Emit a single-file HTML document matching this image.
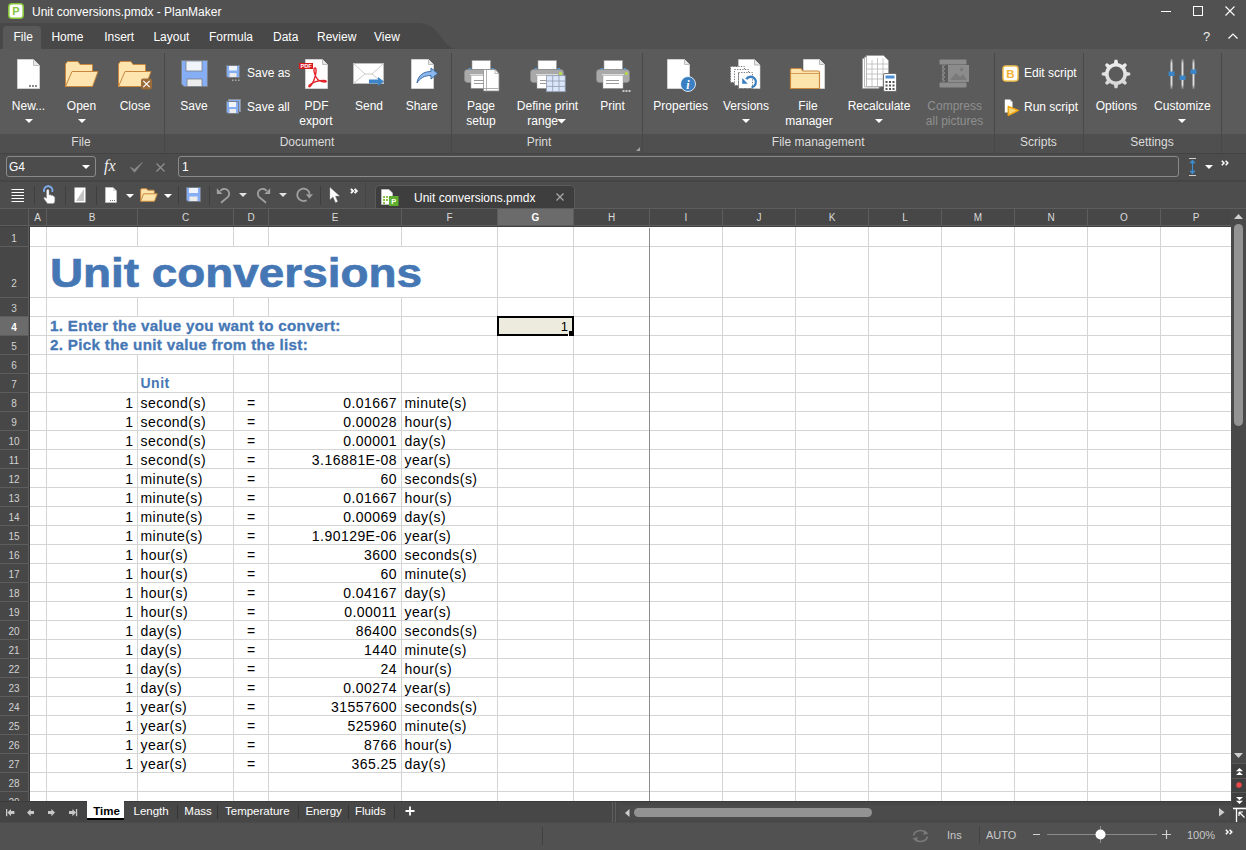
<!DOCTYPE html><html><head><meta charset="utf-8"><style>
html,body{margin:0;padding:0;}
body{width:1246px;height:850px;overflow:hidden;position:relative;background:#515151;font-family:"Liberation Sans",sans-serif;}
.t{position:absolute;white-space:nowrap;}
.r{position:absolute;}
.s{position:absolute;overflow:visible;}
</style></head><body>
<div class="r" style="left:0px;top:0px;width:1246px;height:23px;background:#515151;"></div>
<svg class="s" style="left:0px;top:23px;" width="470" height="26" viewBox="0 0 470 26"><path d="M0 0 H415 C431 0 435 6 441 14 C447 22 451 26 457 26 H0 Z" fill="#484848"/></svg>
<svg class="s" style="left:8px;top:3px;" width="16" height="16" viewBox="0 0 16 16"><rect x="0.8" y="0.8" width="14.4" height="14.4" rx="3" fill="#fff" stroke="#86c53a" stroke-width="1.6"/><text x="8" y="12.2" text-anchor="middle" font-family="Liberation Sans" font-weight="bold" font-size="11" fill="#86c53a">P</text></svg>
<div class="t " style="left:32px;top:4.84px;font-size:12px;line-height:14px;color:#ffffff;">Unit conversions.pmdx - PlanMaker</div>
<div class="r" style="left:1161px;top:11px;width:10px;height:1px;background:#fff;"></div>
<div class="r" style="left:1193px;top:6px;width:10px;height:10px;background:transparent;box-sizing:border-box;border:1px solid #fff;"></div>
<svg class="s" style="left:1225px;top:6px;" width="10" height="10" viewBox="0 0 10 10"><path d="M0.5 0.5 L9.5 9.5 M9.5 0.5 L0.5 9.5" stroke="#fff" stroke-width="1.1"/></svg>
<div class="t " style="left:1203px;top:28.50px;font-size:13px;line-height:15px;color:#eee;">?</div>
<svg class="s" style="left:1228px;top:33px;" width="10" height="6" viewBox="0 0 10 6"><path d="M0.5 5.5 L5 1 L9.5 5.5" stroke="#fff" stroke-width="1.2" fill="none"/></svg>
<svg class="s" style="left:3px;top:26px;" width="38" height="23" viewBox="0 0 38 23"><path d="M0 23 V4 Q0 0 4 0 H34 Q38 0 38 4 V23 Z" fill="#595959"/></svg>
<div class="t " style="left:13.5px;top:29.84px;font-size:12px;line-height:14px;color:#fff;">File</div>
<div class="t " style="left:51.4px;top:29.84px;font-size:12px;line-height:14px;color:#fff;">Home</div>
<div class="t " style="left:104.2px;top:29.84px;font-size:12px;line-height:14px;color:#fff;">Insert</div>
<div class="t " style="left:153.4px;top:29.84px;font-size:12px;line-height:14px;color:#fff;">Layout</div>
<div class="t " style="left:209px;top:29.84px;font-size:12px;line-height:14px;color:#fff;">Formula</div>
<div class="t " style="left:273px;top:29.84px;font-size:12px;line-height:14px;color:#fff;">Data</div>
<div class="t " style="left:317px;top:29.84px;font-size:12px;line-height:14px;color:#fff;">Review</div>
<div class="t " style="left:374px;top:29.84px;font-size:12px;line-height:14px;color:#fff;">View</div>
<div class="r" style="left:0px;top:49px;width:1246px;height:85px;background:#5b5b5b;"></div>
<div class="r" style="left:0px;top:134px;width:1246px;height:19px;background:#4f4f4f;"></div>
<div class="r" style="left:164px;top:53px;width:1px;height:100px;background:#484848;"></div>
<div class="r" style="left:451px;top:53px;width:1px;height:100px;background:#484848;"></div>
<div class="r" style="left:642px;top:53px;width:1px;height:100px;background:#484848;"></div>
<div class="r" style="left:994px;top:53px;width:1px;height:100px;background:#484848;"></div>
<div class="r" style="left:1083px;top:53px;width:1px;height:100px;background:#484848;"></div>
<div class="r" style="left:1221px;top:53px;width:1px;height:100px;background:#484848;"></div>
<div class="t" style="left:-19.0px;width:200px;text-align:center;top:135.34px;font-size:12px;line-height:14px;color:#dcdcdc;">File</div>
<div class="t" style="left:207.0px;width:200px;text-align:center;top:135.34px;font-size:12px;line-height:14px;color:#dcdcdc;">Document</div>
<div class="t" style="left:439.0px;width:200px;text-align:center;top:135.34px;font-size:12px;line-height:14px;color:#dcdcdc;">Print</div>
<div class="t" style="left:718.2px;width:200px;text-align:center;top:135.34px;font-size:12px;line-height:14px;color:#dcdcdc;">File management</div>
<div class="t" style="left:938.4000000000001px;width:200px;text-align:center;top:135.34px;font-size:12px;line-height:14px;color:#dcdcdc;">Scripts</div>
<div class="t" style="left:1052.0px;width:200px;text-align:center;top:135.34px;font-size:12px;line-height:14px;color:#dcdcdc;">Settings</div>
<svg class="s" style="left:17px;top:59px;" width="23" height="30" viewBox="0 0 23 30"><path d="M0.5 0.5 H16.5 L22.5 6.5 V29.5 H0.5 Z" fill="#fff" stroke="#cfcfcf"/><path d="M16.5 0.5 V6.5 H22.5" fill="#e8e8e8" stroke="#bdbdbd"/><rect x="12" y="26" width="2" height="2" fill="#8a8a8a"/><rect x="15" y="26" width="2" height="2" fill="#8a8a8a"/><rect x="18" y="26" width="2" height="2" fill="#8a8a8a"/></svg>
<div class="t" style="left:-71.5px;width:200px;text-align:center;top:98.84px;font-size:12px;line-height:14px;color:#fff;">New...</div>
<svg class="s" style="left:24.5px;top:119px;" width="8" height="4" viewBox="0 0 8 4"><path d="M0 0 H8 L4 4 Z" fill="#fff"/></svg>
<svg class="s" style="left:65px;top:61px;" width="35" height="28" viewBox="0 0 35 28"><path d="M0.5 25.5 V3 L2.5 0.5 H13 L15 3.5 H27 Q27.5 3.5 27.5 4 V10" fill="#fee5b0" stroke="#c8873c" stroke-width="1"/><path d="M0.5 25.5 L7 10.5 H33 L27.5 25.5 Z" fill="#fee5b0" stroke="#c8873c" stroke-width="1" stroke-linejoin="round"/></svg>
<div class="t" style="left:-18.5px;width:200px;text-align:center;top:98.84px;font-size:12px;line-height:14px;color:#fff;">Open</div>
<svg class="s" style="left:77.5px;top:119px;" width="8" height="4" viewBox="0 0 8 4"><path d="M0 0 H8 L4 4 Z" fill="#fff"/></svg>
<svg class="s" style="left:118px;top:61px;" width="35" height="30" viewBox="0 0 35 30"><path d="M0.5 25.5 V3 L2.5 0.5 H13 L15 3.5 H27 Q27.5 3.5 27.5 4 V10" fill="#fee5b0" stroke="#c8873c" stroke-width="1"/><path d="M0.5 25.5 L7 10.5 H33 L27.5 25.5 Z" fill="#fee5b0" stroke="#c8873c" stroke-width="1" stroke-linejoin="round"/><rect x="23" y="17.5" width="11" height="11" rx="2" fill="#9b6c3a"/><path d="M25.3 19.8 L31.7 26.2 M31.7 19.8 L25.3 26.2" stroke="#fff" stroke-width="1.2"/></svg>
<div class="t" style="left:35.0px;width:200px;text-align:center;top:98.84px;font-size:12px;line-height:14px;color:#fff;">Close</div>
<svg class="s" style="left:181px;top:60px;" width="28" height="28" viewBox="0 0 28 28"><g transform="scale(1)"><path d="M0.5 0.5 H26.5 V26.5 H3 L0.5 24 Z" fill="#86aef5" stroke="#7a7f88"/><rect x="5" y="1" width="16" height="10" fill="#f0f4fb" stroke="#7a7f88" stroke-width="0.8"/><rect x="6" y="19" width="15" height="7.5" fill="#ececec" stroke="#7a7f88" stroke-width="0.8"/></g></svg>
<div class="t" style="left:94.0px;width:200px;text-align:center;top:98.84px;font-size:12px;line-height:14px;color:#fff;">Save</div>
<svg class="s" style="left:226px;top:65px;" width="14" height="17" viewBox="0 0 14 17"><path d="M0.5 0.5 H13.5 V12.5 H2 L0.5 11 Z" fill="#86aef5" stroke="#7a7f88"/><rect x="3" y="1" width="8" height="4.5" fill="#f0f4fb"/><rect x="3.5" y="8" width="7" height="4" fill="#ececec"/><rect x="6" y="14.5" width="1.5" height="1.5" fill="#aaa"/><rect x="9" y="14.5" width="1.5" height="1.5" fill="#aaa"/><rect x="12" y="14.5" width="1.5" height="1.5" fill="#aaa"/></svg>
<div class="t " style="left:247px;top:66.34px;font-size:12px;line-height:14px;color:#fff;">Save as</div>
<svg class="s" style="left:226px;top:99px;" width="15" height="16" viewBox="0 0 15 16"><rect x="2.5" y="0.5" width="12" height="12" fill="#86aef5" stroke="#8a8f98"/><path d="M0.5 2.5 H12.5 V14.5 H2 L0.5 13 Z" fill="#86aef5" stroke="#7a7f88"/><rect x="3" y="3" width="7" height="5" fill="#f0f4fb"/><rect x="3.5" y="10" width="6.5" height="4" fill="#ececec"/></svg>
<div class="t " style="left:247px;top:100.34px;font-size:12px;line-height:14px;color:#fff;">Save all</div>
<svg class="s" style="left:299px;top:59px;" width="30" height="30" viewBox="0 0 30 30"><path d="M6.5 0.5 H23.5 L28.5 5.5 V29.5 H6.5 Z" fill="#fff" stroke="#d0d0d0"/><path d="M23.5 0.5 V5.5 H28.5" fill="#e6e6e6" stroke="#bdbdbd"/><path d="M16 9 C14 9 15 14 17 18 C18.5 21 22 23 26 23 C28 23 27.5 21.5 25 21.5 C20 21.5 14 23 10.5 26 C9 27.5 10 28.5 11.5 27 C14 24.5 16.5 18 17 13 C17.3 10 16.8 9 16 9 Z" fill="none" stroke="#e4222a" stroke-width="1.4"/><rect x="0" y="4" width="14" height="6" fill="#d71920"/><text x="7" y="9.2" text-anchor="middle" font-family="Liberation Sans" font-weight="bold" font-size="5.6" fill="#fff">PDF</text></svg>
<div class="t" style="left:216.5px;width:200px;text-align:center;top:98.84px;font-size:12px;line-height:14px;color:#fff;">PDF</div>
<div class="t" style="left:216.0px;width:200px;text-align:center;top:114.34px;font-size:12px;line-height:14px;color:#fff;">export</div>
<svg class="s" style="left:353px;top:63px;" width="32" height="25" viewBox="0 0 32 25"><rect x="0.5" y="0.5" width="30" height="20" fill="#fff" stroke="#bdbdbd"/><path d="M1 1 L12 11 H19 L30 1 M1 20 L12 11 M19 11 L30 20" fill="none" stroke="#c4c4c4" stroke-width="0.9"/><path d="M16 16.5 H25 V14 L31 18.5 L25 23 V20.5 H16 Z" fill="#3d85c6"/></svg>
<div class="t" style="left:269.0px;width:200px;text-align:center;top:98.84px;font-size:12px;line-height:14px;color:#fff;">Send</div>
<svg class="s" style="left:411px;top:59px;" width="28" height="30" viewBox="0 0 28 30"><path d="M0.5 0.5 H17.5 L22.5 5.5 V29.5 H0.5 Z" fill="#fff" stroke="#d0d0d0"/><path d="M17.5 0.5 V5.5 H22.5" fill="#e6e6e6" stroke="#bdbdbd"/><path d="M6 24 C7 16 13 12.5 20 12.5 V9 L26.5 14.5 L20 20 V16.5 C13.5 16.5 9 19 6 24 Z" fill="#8cb8ee" stroke="#3b6ea8" stroke-width="1"/></svg>
<div class="t" style="left:321.7px;width:200px;text-align:center;top:98.84px;font-size:12px;line-height:14px;color:#fff;">Share</div>
<svg class="s" style="left:463.5px;top:60px;" width="37" height="33" viewBox="0 0 37 33"><rect x="8" y="0.5" width="18.5" height="9" fill="#fff" stroke="#9a9a9a" stroke-width="0.6"/><rect x="4.5" y="8" width="2.5" height="1.6" fill="#4c9be0"/><rect x="27.5" y="8" width="2.5" height="1.6" fill="#4c9be0"/><path d="M3.5 9.5 H30.5 Q33.5 9.5 33.5 12.5 V19.5 Q33.5 22.5 30.5 22.5 H3.5 Q0.5 22.5 0.5 19.5 V12.5 Q0.5 9.5 3.5 9.5 Z" fill="#a9a9a9" stroke="#8a8a8a" stroke-width="0.7"/><rect x="6" y="14" width="22" height="1.3" fill="#dcdcdc"/><rect x="7" y="15.3" width="20" height="13" fill="#fff" stroke="#a0a0a0" stroke-width="0.5"/><path d="M10 20.5 H23 M10 23.5 H23" stroke="#9a9a9a" stroke-width="1"/><path d="M19.5 9.5 H31 L35 13.5 V31 H19.5 Z" fill="#fff" stroke="#8e8e8e" stroke-width="0.8"/><path d="M31 9.5 V13.5 H35" fill="none" stroke="#8e8e8e" stroke-width="0.6"/><path d="M22.5 10 V30.5 M20 28.5 H34.5" stroke="#9a9a9a" stroke-width="0.8"/></svg>
<div class="t" style="left:381.0px;width:200px;text-align:center;top:98.84px;font-size:12px;line-height:14px;color:#fff;">Page</div>
<div class="t" style="left:381.0px;width:200px;text-align:center;top:114.34px;font-size:12px;line-height:14px;color:#fff;">setup</div>
<svg class="s" style="left:529.5px;top:60px;" width="37" height="33" viewBox="0 0 37 33"><rect x="8" y="0.5" width="18.5" height="9" fill="#fff" stroke="#9a9a9a" stroke-width="0.6"/><rect x="4.5" y="8" width="2.5" height="1.6" fill="#4c9be0"/><rect x="27.5" y="8" width="2.5" height="1.6" fill="#4c9be0"/><path d="M3.5 9.5 H30.5 Q33.5 9.5 33.5 12.5 V19.5 Q33.5 22.5 30.5 22.5 H3.5 Q0.5 22.5 0.5 19.5 V12.5 Q0.5 9.5 3.5 9.5 Z" fill="#a9a9a9" stroke="#8a8a8a" stroke-width="0.7"/><rect x="6" y="14" width="22" height="1.3" fill="#dcdcdc"/><rect x="7" y="15.3" width="20" height="13" fill="#fff" stroke="#a0a0a0" stroke-width="0.5"/><path d="M10 20.5 H23 M10 23.5 H23" stroke="#9a9a9a" stroke-width="1"/><circle cx="30.4" cy="13.5" r="1.5" fill="#b6e03a"/><rect x="16.5" y="15.7" width="18.7" height="16" fill="#dce6fa" stroke="#8e9aad" stroke-width="0.8"/><path d="M16.5 21 H35.2 M16.5 26.4 H35.2 M22.7 15.7 V31.7 M29 15.7 V31.7" stroke="#8e9aad" stroke-width="0.8"/></svg>
<div class="t" style="left:447.5px;width:200px;text-align:center;top:98.84px;font-size:12px;line-height:14px;color:#fff;">Define print</div>
<div class="t " style="left:527.3px;top:114.34px;font-size:12px;line-height:14px;color:#fff;">range</div>
<svg class="s" style="left:557px;top:119px;" width="9" height="5" viewBox="0 0 9 5"><path d="M0 0 H9 L4.5 4.5 Z" fill="#fff"/></svg>
<svg class="s" style="left:596px;top:60px;" width="37" height="33" viewBox="0 0 37 33"><rect x="8" y="0.5" width="18.5" height="9" fill="#fff" stroke="#9a9a9a" stroke-width="0.6"/><rect x="4.5" y="8" width="2.5" height="1.6" fill="#4c9be0"/><rect x="27.5" y="8" width="2.5" height="1.6" fill="#4c9be0"/><path d="M3.5 9.5 H30.5 Q33.5 9.5 33.5 12.5 V19.5 Q33.5 22.5 30.5 22.5 H3.5 Q0.5 22.5 0.5 19.5 V12.5 Q0.5 9.5 3.5 9.5 Z" fill="#a9a9a9" stroke="#8a8a8a" stroke-width="0.7"/><rect x="6" y="14" width="22" height="1.3" fill="#dcdcdc"/><rect x="7" y="15.3" width="20" height="13" fill="#fff" stroke="#a0a0a0" stroke-width="0.5"/><path d="M10 20.5 H23 M10 23.5 H23" stroke="#9a9a9a" stroke-width="1"/><circle cx="30.4" cy="13.5" r="1.5" fill="#b6e03a"/><rect x="26.5" y="30" width="2" height="2" fill="#c8c8c8"/><rect x="29.5" y="30" width="2" height="2" fill="#c8c8c8"/><rect x="32.5" y="30" width="2" height="2" fill="#c8c8c8"/></svg>
<div class="t" style="left:512.5px;width:200px;text-align:center;top:98.84px;font-size:12px;line-height:14px;color:#fff;">Print</div>
<svg class="s" style="left:635.5px;top:147px;" width="4" height="4" viewBox="0 0 4 4"><path d="M4 0 V4 H0 Z" fill="#a0a0a0"/></svg>
<svg class="s" style="left:667px;top:59px;" width="30" height="34" viewBox="0 0 30 34"><path d="M0.5 0.5 H17.5 L22.5 5.5 V29.5 H0.5 Z" fill="#fff" stroke="#d0d0d0"/><path d="M17.5 0.5 V5.5 H22.5" fill="#e6e6e6" stroke="#bdbdbd"/><circle cx="21" cy="25" r="7.5" fill="#3a7fc1" stroke="#fff" stroke-width="0.8"/><text x="21" y="29.5" text-anchor="middle" font-family="Liberation Serif" font-style="italic" font-weight="bold" font-size="12" fill="#fff">i</text></svg>
<div class="t" style="left:580.7px;width:200px;text-align:center;top:98.84px;font-size:12px;line-height:14px;color:#fff;">Properties</div>
<svg class="s" style="left:729px;top:59px;" width="33" height="31" viewBox="0 0 33 31"><path d="M9.5 0.5 H25.5 L31 6 V29.5 H9.5 Z" fill="#fff" stroke="#d0d0d0" stroke-width="0.6"/><path d="M25.5 0.5 V6 H31" fill="#e8e8e8" stroke="#a8a8a8" stroke-width="0.8"/><rect x="1.5" y="7.5" width="14" height="16" fill="#fff" stroke="#6a6a6a" stroke-width="0.9" stroke-dasharray="1.3 1.3"/><rect x="5.5" y="10.5" width="14" height="16" fill="#fff" stroke="#6a6a6a" stroke-width="0.9" stroke-dasharray="1.3 1.3"/><rect x="9.5" y="13.5" width="14" height="16" fill="#fff" stroke="#6a6a6a" stroke-width="0.9" stroke-dasharray="1.3 1.3"/><rect x="10" y="14" width="13" height="15" fill="#fff"/><path d="M9.5 29.5 H23.5 M9.5 14 V29.5" stroke="#6a6a6a" stroke-width="0.9" stroke-dasharray="1.3 1.3"/><path d="M17.2 20.2 A5.3 5.3 0 1 1 22.5 28.3" fill="none" stroke="#3a7fc1" stroke-width="2.3"/><path d="M13.2 19 V24.8 H18.8 Z" fill="#3a7fc1"/></svg>
<div class="t" style="left:646.0px;width:200px;text-align:center;top:98.84px;font-size:12px;line-height:14px;color:#fff;">Versions</div>
<svg class="s" style="left:741.5px;top:119px;" width="8" height="4" viewBox="0 0 8 4"><path d="M0 0 H8 L4 4 Z" fill="#fff"/></svg>
<svg class="s" style="left:789px;top:59px;" width="38" height="31" viewBox="0 0 38 31"><path d="M14.5 0.5 H30.5 L35.5 5.5 V29.5 H14.5 Z" fill="#fff" stroke="#d0d0d0"/><path d="M30.5 0.5 V5.5 H35.5" fill="#e6e6e6" stroke="#bdbdbd"/><path d="M1.5 29.5 V11 Q1.5 9.5 3 9.5 H12 L14 12 H29 Q30.5 12 30.5 13.5 V29.5 Z" fill="#fde4ad" stroke="#c98a3e" stroke-width="1.2"/><path d="M1.5 14.5 H30.5" stroke="#c98a3e" stroke-width="0.8"/></svg>
<div class="t" style="left:708.0px;width:200px;text-align:center;top:98.84px;font-size:12px;line-height:14px;color:#fff;">File</div>
<div class="t" style="left:709.0px;width:200px;text-align:center;top:114.34px;font-size:12px;line-height:14px;color:#fff;">manager</div>
<svg class="s" style="left:862px;top:55px;" width="36" height="37" viewBox="0 0 36 37"><path d="M0.5 3.5 H17 V33.5 H0.5 Z" fill="#fff" stroke="#999" stroke-width="0.7"/><path d="M2.5 2 H19 V32 H2.5 Z" fill="#fff" stroke="#999" stroke-width="0.7"/><path d="M4.5 0.5 H21.5 L26.5 5.5 V31.5 H4.5 Z" fill="#fff" stroke="#999" stroke-width="0.7"/><path d="M4.5 9 H26.5 M4.5 14 H26.5 M4.5 19 H26.5 M4.5 24 H26.5 M10 5 V31.5 M15.5 3 V31.5 M21 3 V31.5" stroke="#b8b8b8" stroke-width="0.8"/><rect x="21.5" y="18.5" width="13" height="18" rx="1.5" fill="#fff" stroke="#666" stroke-width="0.9"/><rect x="23.5" y="20.5" width="9" height="3" fill="#4c8fd6"/><g fill="#555"><rect x="23.5" y="26" width="2" height="2"/><rect x="27" y="26" width="2" height="2"/><rect x="30.5" y="26" width="2" height="2"/><rect x="23.5" y="29.5" width="2" height="2"/><rect x="27" y="29.5" width="2" height="2"/><rect x="30.5" y="29.5" width="2" height="2"/><rect x="23.5" y="33" width="2" height="2"/><rect x="27" y="33" width="2" height="2"/><rect x="30.5" y="33" width="2" height="2"/></g></svg>
<div class="t" style="left:779.0px;width:200px;text-align:center;top:98.84px;font-size:12px;line-height:14px;color:#fff;">Recalculate</div>
<svg class="s" style="left:874.5px;top:119px;" width="8" height="4" viewBox="0 0 8 4"><path d="M0 0 H8 L4 4 Z" fill="#fff"/></svg>
<svg class="s" style="left:939px;top:59px;" width="31" height="30" viewBox="0 0 31 30"><rect x="0.5" y="0.5" width="27" height="5" rx="1" fill="#8c8c8c"/><rect x="0.5" y="23.5" width="27" height="5" rx="1" fill="#8c8c8c"/><rect x="9" y="6" width="21" height="17" fill="#8c8c8c"/><path d="M11 21 L17 14 L21 18 L24 15 L28 21 Z" fill="#7a7a7a"/><circle cx="22.5" cy="10.5" r="1.8" fill="#7a7a7a"/><path d="M4 6 V23 M6 6 L3 8 L6 10 L3 12 L6 14 L3 16 L6 18 L3 20 L6 22" stroke="#8c8c8c" stroke-width="1" fill="none"/></svg>
<div class="t" style="left:854.7px;width:200px;text-align:center;top:98.84px;font-size:12px;line-height:14px;color:#8f8f8f;">Compress</div>
<div class="t" style="left:854.5px;width:200px;text-align:center;top:114.34px;font-size:12px;line-height:14px;color:#8f8f8f;">all pictures</div>
<svg class="s" style="left:1001.5px;top:64.5px;" width="17" height="17" viewBox="0 0 17 17"><rect x="1" y="1" width="15" height="15" rx="3" fill="#fff" stroke="#f5c451" stroke-width="1.5"/><text x="8.5" y="12.6" text-anchor="middle" font-family="Liberation Sans" font-weight="bold" font-size="11.5" fill="#f2b33a">B</text></svg>
<div class="t " style="left:1024px;top:65.64px;font-size:12px;line-height:14px;color:#fff;">Edit script</div>
<svg class="s" style="left:1004px;top:99px;" width="16" height="18" viewBox="0 0 16 18"><path d="M0.8 0.5 H6 L8.5 3 V13.5 H0.8 Z" fill="#fff"/><path d="M6 0.5 V3 H8.5" fill="#ddd"/><path d="M4.3 7.5 L14.3 11.4 L4.3 16.3 Z" fill="#f6d57f" stroke="#eea60f" stroke-width="1.5" stroke-linejoin="round"/></svg>
<div class="t " style="left:1024px;top:99.54px;font-size:12px;line-height:14px;color:#fff;">Run script</div>
<svg class="s" style="left:1101px;top:59px;" width="30" height="30" viewBox="0 0 30 30"><defs><linearGradient id="gg" x1="0" y1="0" x2="0" y2="1"><stop offset="0" stop-color="#f0f0f0"/><stop offset="1" stop-color="#d4d4d4"/></linearGradient></defs><polygon points="10.79,4.84 12.90,4.20 13.63,0.77 16.37,0.77 17.10,4.20 19.21,4.84 21.15,5.88 24.10,3.97 26.03,5.90 24.12,8.85 25.16,10.79 25.80,12.90 29.23,13.63 29.23,16.37 25.80,17.10 25.16,19.21 24.12,21.15 26.03,24.10 24.10,26.03 21.15,24.12 19.21,25.16 17.10,25.80 16.37,29.23 13.63,29.23 12.90,25.80 10.79,25.16 8.85,24.12 5.90,26.03 3.97,24.10 5.88,21.15 4.84,19.21 4.20,17.10 0.77,16.37 0.77,13.63 4.20,12.90 4.84,10.79 5.88,8.85 3.97,5.90 5.90,3.97 8.85,5.88" fill="url(#gg)"/><circle cx="15" cy="15" r="7.4" fill="#5b5b5b"/></svg>
<div class="t" style="left:1016.4000000000001px;width:200px;text-align:center;top:98.84px;font-size:12px;line-height:14px;color:#fff;">Options</div>
<svg class="s" style="left:1168px;top:59px;" width="30" height="31" viewBox="0 0 30 31"><defs><linearGradient id="sg" x1="0" y1="0" x2="0" y2="1"><stop offset="0" stop-color="#7a7a7a"/><stop offset="0.15" stop-color="#dedede"/><stop offset="0.85" stop-color="#dedede"/><stop offset="1" stop-color="#7a7a7a"/></linearGradient></defs><path d="M3.5 0 V30 M14.5 0 V30 M25.5 0 V30" stroke="url(#sg)" stroke-width="1.9"/><rect x="0.5" y="12.5" width="6" height="4.5" fill="#3a86c8"/><rect x="11.5" y="16.5" width="6" height="4.5" fill="#3a86c8"/><rect x="22.5" y="10.5" width="6" height="4.5" fill="#3a86c8"/></svg>
<div class="t" style="left:1082.4px;width:200px;text-align:center;top:98.84px;font-size:12px;line-height:14px;color:#fff;">Customize</div>
<svg class="s" style="left:1177.5px;top:119px;" width="8" height="4" viewBox="0 0 8 4"><path d="M0 0 H8 L4 4 Z" fill="#fff"/></svg>
<div class="r" style="left:0px;top:153px;width:1246px;height:28px;background:#4c4c4c;"></div>
<div class="r" style="left:0px;top:153px;width:1246px;height:1px;background:#434343;"></div>
<div class="r" style="left:0px;top:180px;width:1246px;height:2px;background:#454545;"></div>
<div class="r" style="left:6px;top:156px;width:90px;height:21px;box-sizing:border-box;border:1px solid #8a8a8a;border-radius:3px;"></div>
<div class="t " style="left:9px;top:159.84px;font-size:12px;line-height:14px;color:#fff;">G4</div>
<svg class="s" style="left:82px;top:165px;" width="8" height="4" viewBox="0 0 8 4"><path d="M0 0 H8 L4 4 Z" fill="#fff"/></svg>
<div class="t " style="left:104px;top:157.46px;font-size:16px;line-height:18px;color:#f0f0f0;font-family:'Liberation Serif',serif;font-style:italic;">fx</div>
<svg class="s" style="left:130px;top:162px;" width="13" height="11" viewBox="0 0 13 11"><path d="M0.3 5.2 L4.6 10.3 L12.6 0.3 L4.4 7.4 Z" fill="#8c8c8c" stroke="#8c8c8c" stroke-width="0.6" stroke-linejoin="round"/></svg>
<svg class="s" style="left:156px;top:163px;" width="9" height="9" viewBox="0 0 9 9"><path d="M0.5 0.5 L8.5 8.5 M8.5 0.5 L0.5 8.5" stroke="#8f8f8f" stroke-width="1.3"/></svg>
<div class="r" style="left:178px;top:156px;width:1001px;height:21px;box-sizing:border-box;border:1px solid #8a8a8a;border-radius:3px;"></div>
<div class="t " style="left:182px;top:159.84px;font-size:12px;line-height:14px;color:#fff;">1</div>
<svg class="s" style="left:1186px;top:157px;" width="14" height="20" viewBox="0 0 14 20"><path d="M3 1.5 H10 M3 18.5 H10" stroke="#cfcfcf" stroke-width="1"/><path d="M6.5 3 V17" stroke="#3d8fd0" stroke-width="1.1"/><path d="M3.8 6 L6.5 3 L9.2 6 Z M3.8 14 L6.5 17 L9.2 14 Z" fill="#3d8fd0" stroke="#3d8fd0" stroke-width="0.6"/></svg>
<svg class="s" style="left:1205px;top:165px;" width="8" height="4" viewBox="0 0 8 4"><path d="M0 0 H8 L4 4 Z" fill="#fff"/></svg>
<svg class="s" style="left:1221px;top:160px;" width="8" height="6" viewBox="0 0 8 6"><path d="M0.8 0.8 L3 3 L0.8 5.2 M4.6 0.8 L6.8 3 L4.6 5.2" stroke="#fff" stroke-width="1.5" fill="none"/></svg>
<div class="r" style="left:0px;top:182px;width:1246px;height:26px;background:#4d4d4d;"></div>
<div class="r" style="left:34px;top:186px;width:1px;height:19px;background:#3f3f3f;"></div>
<div class="r" style="left:65px;top:186px;width:1px;height:19px;background:#3f3f3f;"></div>
<div class="r" style="left:96px;top:186px;width:1px;height:19px;background:#3f3f3f;"></div>
<div class="r" style="left:178px;top:186px;width:1px;height:19px;background:#3f3f3f;"></div>
<div class="r" style="left:209px;top:186px;width:1px;height:19px;background:#3f3f3f;"></div>
<div class="r" style="left:320px;top:186px;width:1px;height:19px;background:#3f3f3f;"></div>
<svg class="s" style="left:11px;top:188px;" width="14" height="15" viewBox="0 0 14 15"><path d="M0.5 1.5 H13 M0.5 4.5 H13 M0.5 7.5 H13 M0.5 10.5 H13 M0.5 13.5 H13" stroke="#fff" stroke-width="1"/></svg>
<svg class="s" style="left:42px;top:186px;" width="14" height="18" viewBox="0 0 14 18"><path d="M2.2 6 A4.3 4.3 0 1 1 10.2 6" stroke="#7fb0f5" stroke-width="1.7" fill="none"/><path d="M5.5 17.5 L2.2 13 Q1.3 11.6 2.6 11.3 L4.6 12.3 V4.8 Q4.6 3.5 5.8 3.5 Q7 3.5 7 4.8 V9 Q8.6 8.3 9.4 9.5 Q10.9 9 11.4 10.3 Q12.8 10.2 12.8 11.8 V14.8 Q12.8 17.5 10.8 17.5 Z" fill="#fff" stroke="#9a9a9a" stroke-width="0.5"/></svg>
<svg class="s" style="left:74px;top:187px;" width="12" height="16" viewBox="0 0 12 16"><rect x="0.5" y="0.5" width="11" height="15" fill="#fff"/><path d="M2 14 L10 2 V14 Z" fill="#c4c4c4"/></svg>
<svg class="s" style="left:105px;top:187px;" width="12" height="16" viewBox="0 0 12 16"><path d="M0.5 0.5 H8 L11.5 4 V15.5 H0.5 Z" fill="#fff" stroke="#ccc" stroke-width="0.6"/><path d="M8 0.5 V4 H11.5" fill="#ddd"/><rect x="5" y="13" width="1" height="1" fill="#777"/><rect x="7" y="13" width="1" height="1" fill="#777"/><rect x="9" y="13" width="1" height="1" fill="#777"/></svg>
<svg class="s" style="left:126px;top:194px;" width="8" height="4" viewBox="0 0 8 4"><path d="M0 0 H8 L4 4 Z" fill="#fff"/></svg>
<svg class="s" style="left:140px;top:188px;" width="18" height="14" viewBox="0 0 18 14"><path d="M0.7 13 V1.8 Q0.7 0.7 1.8 0.7 H6.5 L7.8 2.2 H13.5 Q14.3 2.2 14.3 3 V5.5" fill="#fde4ad" stroke="#c98a3e" stroke-width="1"/><path d="M0.7 13.3 L3.5 5.8 H17.3 L14.5 13.3 Z" fill="#fde4ad" stroke="#c98a3e" stroke-width="1" stroke-linejoin="round"/></svg>
<svg class="s" style="left:164px;top:194px;" width="8" height="4" viewBox="0 0 8 4"><path d="M0 0 H8 L4 4 Z" fill="#fff"/></svg>
<svg class="s" style="left:186px;top:187px;" width="15" height="15" viewBox="0 0 15 15"><path d="M0.5 0.5 H14.5 V14.5 H2 L0.5 13 Z" fill="#86aef5" stroke="#7a7f88" stroke-width="0.8"/><rect x="3" y="1" width="9" height="5" fill="#f0f4fb"/><rect x="3.5" y="9.5" width="8" height="4.5" fill="#ececec"/></svg>
<svg class="s" style="left:216px;top:187px;" width="15" height="17" viewBox="0 0 15 17"><path d="M4.3 4 A4.6 4.6 0 1 1 12.3 9.6 L5 15.8" stroke="#a0a0a0" stroke-width="1.8" fill="none"/><path d="M0.8 1.2 V7 H6.6 Z" fill="#a0a0a0"/></svg>
<svg class="s" style="left:239px;top:193px;" width="8" height="4" viewBox="0 0 8 4"><path d="M0 0 H8 L4 4 Z" fill="#e0e0e0"/></svg>
<svg class="s" style="left:256px;top:187px;" width="15" height="17" viewBox="0 0 15 17"><path d="M10.7 4 A4.6 4.6 0 1 0 2.7 9.6 L10 15.8" stroke="#a0a0a0" stroke-width="1.8" fill="none"/><path d="M14.2 1.2 V7 H8.4 Z" fill="#a0a0a0"/></svg>
<svg class="s" style="left:279px;top:193px;" width="8" height="4" viewBox="0 0 8 4"><path d="M0 0 H8 L4 4 Z" fill="#e0e0e0"/></svg>
<svg class="s" style="left:296px;top:187px;" width="18" height="16" viewBox="0 0 18 16"><path d="M13.6 6.8 A6.2 6.2 0 1 0 10.6 13.2" stroke="#a0a0a0" stroke-width="1.8" fill="none"/><path d="M9.8 7.2 H17 L13.4 11.4 Z" fill="#a0a0a0"/></svg>
<svg class="s" style="left:329px;top:187px;" width="12" height="17" viewBox="0 0 12 17"><path d="M1 0.5 V12.5 L4 9.8 L6.6 15.5 L8.6 14.6 L6.2 9 H10.5 Z" fill="#fff" stroke="#bbb" stroke-width="0.4"/></svg>
<svg class="s" style="left:349.5px;top:188px;" width="9" height="6" viewBox="0 0 9 6"><path d="M0.9 0.9 L3.1 3 L0.9 5.1 M4.6 0.9 L6.8 3 L4.6 5.1" stroke="#fff" stroke-width="1.9" fill="none"/></svg>
<div class="r" style="left:365px;top:181px;width:1px;height:27px;background:#454545;"></div>
<svg class="s" style="left:375px;top:185px;" width="200" height="23" viewBox="0 0 200 23"><path d="M0.5 23 V4 Q0.5 0.5 4 0.5 H196 Q199.5 0.5 199.5 4 V23" fill="#3e3e3e" stroke="#5a5a5a"/></svg>
<svg class="s" style="left:381px;top:189px;" width="18" height="17" viewBox="0 0 18 17"><path d="M0.5 0.5 H8 L11.5 4 V15.5 H0.5 Z" fill="#fff" stroke="#ccc" stroke-width="0.6"/><g fill="#8bc34a"><rect x="2" y="7" width="2" height="2"/><rect x="5" y="7" width="2" height="2"/><rect x="2" y="10" width="2" height="2"/><rect x="5" y="10" width="2" height="2"/><rect x="2" y="13" width="2" height="2"/></g><rect x="8" y="7" width="9.5" height="10" fill="#5fae2d"/><text x="12.8" y="15.3" text-anchor="middle" font-family="Liberation Sans" font-weight="bold" font-size="7.5" fill="#fff">P</text></svg>
<div class="t " style="left:414px;top:190.84px;font-size:12px;line-height:14px;color:#fff;">Unit conversions.pmdx</div>
<svg class="s" style="left:556px;top:193px;" width="8" height="8" viewBox="0 0 8 8"><path d="M0.5 0.5 L7.5 7.5 M7.5 0.5 L0.5 7.5" stroke="#aaa" stroke-width="1.2"/></svg>
<div class="r" style="left:0px;top:208px;width:1246px;height:19px;background:#474747;"></div>
<div class="r" style="left:0px;top:208px;width:1246px;height:1px;background:#5d5d5d;"></div>
<div class="r" style="left:0px;top:225px;width:1231px;height:1px;background:#5d5d5d;"></div>
<div class="r" style="left:0px;top:226px;width:1231px;height:1px;background:#3f3f3f;"></div>
<div class="r" style="left:0px;top:227px;width:29px;height:574px;background:#474747;"></div>
<div class="r" style="left:28px;top:209px;width:1px;height:592px;background:#5d5d5d;"></div>
<div class="r" style="left:29px;top:227px;width:1px;height:574px;background:#3a3a3a;"></div>
<div class="r" style="left:30px;top:227px;width:1201px;height:574px;background:#ffffff;"></div>
<div class="r" style="left:46px;top:209px;width:1px;height:16px;background:#5d5d5d;"></div>
<div class="t" style="left:-62.5px;width:200px;text-align:center;top:211.53px;font-size:10px;line-height:12px;color:#dadada;">A</div>
<div class="r" style="left:137px;top:209px;width:1px;height:16px;background:#5d5d5d;"></div>
<div class="t" style="left:-8.0px;width:200px;text-align:center;top:211.53px;font-size:10px;line-height:12px;color:#dadada;">B</div>
<div class="r" style="left:233px;top:209px;width:1px;height:16px;background:#5d5d5d;"></div>
<div class="t" style="left:85.5px;width:200px;text-align:center;top:211.53px;font-size:10px;line-height:12px;color:#dadada;">C</div>
<div class="r" style="left:268px;top:209px;width:1px;height:16px;background:#5d5d5d;"></div>
<div class="t" style="left:151.0px;width:200px;text-align:center;top:211.53px;font-size:10px;line-height:12px;color:#dadada;">D</div>
<div class="r" style="left:401px;top:209px;width:1px;height:16px;background:#5d5d5d;"></div>
<div class="t" style="left:235.0px;width:200px;text-align:center;top:211.53px;font-size:10px;line-height:12px;color:#dadada;">E</div>
<div class="r" style="left:497px;top:209px;width:1px;height:16px;background:#5d5d5d;"></div>
<div class="t" style="left:349.5px;width:200px;text-align:center;top:211.53px;font-size:10px;line-height:12px;color:#dadada;">F</div>
<div class="r" style="left:498px;top:209px;width:75px;height:16px;background:#6b6b6b;"></div>
<div class="r" style="left:573px;top:209px;width:1px;height:16px;background:#5d5d5d;"></div>
<div class="t" style="left:435.5px;width:200px;text-align:center;top:211.53px;font-size:10px;line-height:12px;color:#fff;font-weight:bold;">G</div>
<div class="r" style="left:649px;top:209px;width:1px;height:16px;background:#5d5d5d;"></div>
<div class="t" style="left:511.5px;width:200px;text-align:center;top:211.53px;font-size:10px;line-height:12px;color:#dadada;">H</div>
<div class="r" style="left:722px;top:209px;width:1px;height:16px;background:#5d5d5d;"></div>
<div class="t" style="left:586.0px;width:200px;text-align:center;top:211.53px;font-size:10px;line-height:12px;color:#dadada;">I</div>
<div class="r" style="left:795px;top:209px;width:1px;height:16px;background:#5d5d5d;"></div>
<div class="t" style="left:659.0px;width:200px;text-align:center;top:211.53px;font-size:10px;line-height:12px;color:#dadada;">J</div>
<div class="r" style="left:868px;top:209px;width:1px;height:16px;background:#5d5d5d;"></div>
<div class="t" style="left:732.0px;width:200px;text-align:center;top:211.53px;font-size:10px;line-height:12px;color:#dadada;">K</div>
<div class="r" style="left:941px;top:209px;width:1px;height:16px;background:#5d5d5d;"></div>
<div class="t" style="left:805.0px;width:200px;text-align:center;top:211.53px;font-size:10px;line-height:12px;color:#dadada;">L</div>
<div class="r" style="left:1014px;top:209px;width:1px;height:16px;background:#5d5d5d;"></div>
<div class="t" style="left:878.0px;width:200px;text-align:center;top:211.53px;font-size:10px;line-height:12px;color:#dadada;">M</div>
<div class="r" style="left:1087px;top:209px;width:1px;height:16px;background:#5d5d5d;"></div>
<div class="t" style="left:951.0px;width:200px;text-align:center;top:211.53px;font-size:10px;line-height:12px;color:#dadada;">N</div>
<div class="r" style="left:1160px;top:209px;width:1px;height:16px;background:#5d5d5d;"></div>
<div class="t" style="left:1024.0px;width:200px;text-align:center;top:211.53px;font-size:10px;line-height:12px;color:#dadada;">O</div>
<div class="t" style="left:1096.0px;width:200px;text-align:center;top:211.53px;font-size:10px;line-height:12px;color:#dadada;">P</div>
<div class="r" style="left:30px;top:246px;width:1201px;height:1px;background:#d4d4d4;"></div>
<div class="r" style="left:0px;top:246px;width:28px;height:1px;background:#5d5d5d;"></div>
<div class="r" style="left:30px;top:297px;width:1201px;height:1px;background:#d4d4d4;"></div>
<div class="r" style="left:0px;top:297px;width:28px;height:1px;background:#5d5d5d;"></div>
<div class="r" style="left:30px;top:316px;width:1201px;height:1px;background:#d4d4d4;"></div>
<div class="r" style="left:0px;top:316px;width:28px;height:1px;background:#5d5d5d;"></div>
<div class="r" style="left:30px;top:335px;width:1201px;height:1px;background:#d4d4d4;"></div>
<div class="r" style="left:0px;top:335px;width:28px;height:1px;background:#5d5d5d;"></div>
<div class="r" style="left:30px;top:354px;width:1201px;height:1px;background:#d4d4d4;"></div>
<div class="r" style="left:0px;top:354px;width:28px;height:1px;background:#5d5d5d;"></div>
<div class="r" style="left:30px;top:373px;width:1201px;height:1px;background:#d4d4d4;"></div>
<div class="r" style="left:0px;top:373px;width:28px;height:1px;background:#5d5d5d;"></div>
<div class="r" style="left:30px;top:392px;width:1201px;height:1px;background:#d4d4d4;"></div>
<div class="r" style="left:0px;top:392px;width:28px;height:1px;background:#5d5d5d;"></div>
<div class="r" style="left:30px;top:411px;width:1201px;height:1px;background:#d4d4d4;"></div>
<div class="r" style="left:0px;top:411px;width:28px;height:1px;background:#5d5d5d;"></div>
<div class="r" style="left:30px;top:430px;width:1201px;height:1px;background:#d4d4d4;"></div>
<div class="r" style="left:0px;top:430px;width:28px;height:1px;background:#5d5d5d;"></div>
<div class="r" style="left:30px;top:449px;width:1201px;height:1px;background:#d4d4d4;"></div>
<div class="r" style="left:0px;top:449px;width:28px;height:1px;background:#5d5d5d;"></div>
<div class="r" style="left:30px;top:468px;width:1201px;height:1px;background:#d4d4d4;"></div>
<div class="r" style="left:0px;top:468px;width:28px;height:1px;background:#5d5d5d;"></div>
<div class="r" style="left:30px;top:487px;width:1201px;height:1px;background:#d4d4d4;"></div>
<div class="r" style="left:0px;top:487px;width:28px;height:1px;background:#5d5d5d;"></div>
<div class="r" style="left:30px;top:506px;width:1201px;height:1px;background:#d4d4d4;"></div>
<div class="r" style="left:0px;top:506px;width:28px;height:1px;background:#5d5d5d;"></div>
<div class="r" style="left:30px;top:525px;width:1201px;height:1px;background:#d4d4d4;"></div>
<div class="r" style="left:0px;top:525px;width:28px;height:1px;background:#5d5d5d;"></div>
<div class="r" style="left:30px;top:544px;width:1201px;height:1px;background:#d4d4d4;"></div>
<div class="r" style="left:0px;top:544px;width:28px;height:1px;background:#5d5d5d;"></div>
<div class="r" style="left:30px;top:563px;width:1201px;height:1px;background:#d4d4d4;"></div>
<div class="r" style="left:0px;top:563px;width:28px;height:1px;background:#5d5d5d;"></div>
<div class="r" style="left:30px;top:582px;width:1201px;height:1px;background:#d4d4d4;"></div>
<div class="r" style="left:0px;top:582px;width:28px;height:1px;background:#5d5d5d;"></div>
<div class="r" style="left:30px;top:601px;width:1201px;height:1px;background:#d4d4d4;"></div>
<div class="r" style="left:0px;top:601px;width:28px;height:1px;background:#5d5d5d;"></div>
<div class="r" style="left:30px;top:620px;width:1201px;height:1px;background:#d4d4d4;"></div>
<div class="r" style="left:0px;top:620px;width:28px;height:1px;background:#5d5d5d;"></div>
<div class="r" style="left:30px;top:639px;width:1201px;height:1px;background:#d4d4d4;"></div>
<div class="r" style="left:0px;top:639px;width:28px;height:1px;background:#5d5d5d;"></div>
<div class="r" style="left:30px;top:658px;width:1201px;height:1px;background:#d4d4d4;"></div>
<div class="r" style="left:0px;top:658px;width:28px;height:1px;background:#5d5d5d;"></div>
<div class="r" style="left:30px;top:677px;width:1201px;height:1px;background:#d4d4d4;"></div>
<div class="r" style="left:0px;top:677px;width:28px;height:1px;background:#5d5d5d;"></div>
<div class="r" style="left:30px;top:696px;width:1201px;height:1px;background:#d4d4d4;"></div>
<div class="r" style="left:0px;top:696px;width:28px;height:1px;background:#5d5d5d;"></div>
<div class="r" style="left:30px;top:715px;width:1201px;height:1px;background:#d4d4d4;"></div>
<div class="r" style="left:0px;top:715px;width:28px;height:1px;background:#5d5d5d;"></div>
<div class="r" style="left:30px;top:734px;width:1201px;height:1px;background:#d4d4d4;"></div>
<div class="r" style="left:0px;top:734px;width:28px;height:1px;background:#5d5d5d;"></div>
<div class="r" style="left:30px;top:753px;width:1201px;height:1px;background:#d4d4d4;"></div>
<div class="r" style="left:0px;top:753px;width:28px;height:1px;background:#5d5d5d;"></div>
<div class="r" style="left:30px;top:772px;width:1201px;height:1px;background:#d4d4d4;"></div>
<div class="r" style="left:0px;top:772px;width:28px;height:1px;background:#5d5d5d;"></div>
<div class="r" style="left:30px;top:791px;width:1201px;height:1px;background:#d4d4d4;"></div>
<div class="r" style="left:0px;top:791px;width:28px;height:1px;background:#5d5d5d;"></div>
<div class="r" style="left:46px;top:227px;width:1px;height:574px;background:#d4d4d4;"></div>
<div class="r" style="left:137px;top:227px;width:1px;height:20px;background:#d4d4d4;"></div>
<div class="r" style="left:137px;top:297px;width:1px;height:20px;background:#d4d4d4;"></div>
<div class="r" style="left:137px;top:335px;width:1px;height:1px;background:#d4d4d4;"></div>
<div class="r" style="left:137px;top:354px;width:1px;height:447px;background:#d4d4d4;"></div>
<div class="r" style="left:233px;top:227px;width:1px;height:20px;background:#d4d4d4;"></div>
<div class="r" style="left:233px;top:297px;width:1px;height:20px;background:#d4d4d4;"></div>
<div class="r" style="left:233px;top:335px;width:1px;height:1px;background:#d4d4d4;"></div>
<div class="r" style="left:233px;top:354px;width:1px;height:447px;background:#d4d4d4;"></div>
<div class="r" style="left:268px;top:227px;width:1px;height:20px;background:#d4d4d4;"></div>
<div class="r" style="left:268px;top:297px;width:1px;height:20px;background:#d4d4d4;"></div>
<div class="r" style="left:268px;top:335px;width:1px;height:1px;background:#d4d4d4;"></div>
<div class="r" style="left:268px;top:354px;width:1px;height:447px;background:#d4d4d4;"></div>
<div class="r" style="left:401px;top:227px;width:1px;height:20px;background:#d4d4d4;"></div>
<div class="r" style="left:401px;top:297px;width:1px;height:504px;background:#d4d4d4;"></div>
<div class="r" style="left:497px;top:227px;width:1px;height:574px;background:#d4d4d4;"></div>
<div class="r" style="left:573px;top:227px;width:1px;height:574px;background:#d4d4d4;"></div>
<div class="r" style="left:649px;top:228px;width:1px;height:573px;background:#8c8c8c;"></div>
<div class="r" style="left:722px;top:227px;width:1px;height:574px;background:#d4d4d4;"></div>
<div class="r" style="left:795px;top:227px;width:1px;height:574px;background:#d4d4d4;"></div>
<div class="r" style="left:868px;top:227px;width:1px;height:574px;background:#d4d4d4;"></div>
<div class="r" style="left:941px;top:227px;width:1px;height:574px;background:#d4d4d4;"></div>
<div class="r" style="left:1014px;top:227px;width:1px;height:574px;background:#d4d4d4;"></div>
<div class="r" style="left:1087px;top:227px;width:1px;height:574px;background:#d4d4d4;"></div>
<div class="r" style="left:1160px;top:227px;width:1px;height:574px;background:#d4d4d4;"></div>
<div class="t" style="left:-86.0px;width:200px;text-align:center;top:233.03px;font-size:10px;line-height:12px;color:#d2d2d2;">1</div>
<div class="t" style="left:-86.0px;width:200px;text-align:center;top:278.04px;font-size:10px;line-height:12px;color:#d2d2d2;">2</div>
<div class="t" style="left:-86.0px;width:200px;text-align:center;top:303.04px;font-size:10px;line-height:12px;color:#d2d2d2;">3</div>
<div class="r" style="left:0px;top:317px;width:28px;height:18px;background:#6b6b6b;"></div>
<div class="t" style="left:-86.0px;width:200px;text-align:center;top:322.04px;font-size:10px;line-height:12px;color:#fff;font-weight:bold;">4</div>
<div class="t" style="left:-86.0px;width:200px;text-align:center;top:341.04px;font-size:10px;line-height:12px;color:#d2d2d2;">5</div>
<div class="t" style="left:-86.0px;width:200px;text-align:center;top:360.04px;font-size:10px;line-height:12px;color:#d2d2d2;">6</div>
<div class="t" style="left:-86.0px;width:200px;text-align:center;top:379.04px;font-size:10px;line-height:12px;color:#d2d2d2;">7</div>
<div class="t" style="left:-86.0px;width:200px;text-align:center;top:398.04px;font-size:10px;line-height:12px;color:#d2d2d2;">8</div>
<div class="t" style="left:-86.0px;width:200px;text-align:center;top:417.04px;font-size:10px;line-height:12px;color:#d2d2d2;">9</div>
<div class="t" style="left:-86.0px;width:200px;text-align:center;top:436.04px;font-size:10px;line-height:12px;color:#d2d2d2;">10</div>
<div class="t" style="left:-86.0px;width:200px;text-align:center;top:455.04px;font-size:10px;line-height:12px;color:#d2d2d2;">11</div>
<div class="t" style="left:-86.0px;width:200px;text-align:center;top:474.04px;font-size:10px;line-height:12px;color:#d2d2d2;">12</div>
<div class="t" style="left:-86.0px;width:200px;text-align:center;top:493.04px;font-size:10px;line-height:12px;color:#d2d2d2;">13</div>
<div class="t" style="left:-86.0px;width:200px;text-align:center;top:512.03px;font-size:10px;line-height:12px;color:#d2d2d2;">14</div>
<div class="t" style="left:-86.0px;width:200px;text-align:center;top:531.03px;font-size:10px;line-height:12px;color:#d2d2d2;">15</div>
<div class="t" style="left:-86.0px;width:200px;text-align:center;top:550.03px;font-size:10px;line-height:12px;color:#d2d2d2;">16</div>
<div class="t" style="left:-86.0px;width:200px;text-align:center;top:569.03px;font-size:10px;line-height:12px;color:#d2d2d2;">17</div>
<div class="t" style="left:-86.0px;width:200px;text-align:center;top:588.03px;font-size:10px;line-height:12px;color:#d2d2d2;">18</div>
<div class="t" style="left:-86.0px;width:200px;text-align:center;top:607.03px;font-size:10px;line-height:12px;color:#d2d2d2;">19</div>
<div class="t" style="left:-86.0px;width:200px;text-align:center;top:626.03px;font-size:10px;line-height:12px;color:#d2d2d2;">20</div>
<div class="t" style="left:-86.0px;width:200px;text-align:center;top:645.03px;font-size:10px;line-height:12px;color:#d2d2d2;">21</div>
<div class="t" style="left:-86.0px;width:200px;text-align:center;top:664.03px;font-size:10px;line-height:12px;color:#d2d2d2;">22</div>
<div class="t" style="left:-86.0px;width:200px;text-align:center;top:683.03px;font-size:10px;line-height:12px;color:#d2d2d2;">23</div>
<div class="t" style="left:-86.0px;width:200px;text-align:center;top:702.03px;font-size:10px;line-height:12px;color:#d2d2d2;">24</div>
<div class="t" style="left:-86.0px;width:200px;text-align:center;top:721.03px;font-size:10px;line-height:12px;color:#d2d2d2;">25</div>
<div class="t" style="left:-86.0px;width:200px;text-align:center;top:740.03px;font-size:10px;line-height:12px;color:#d2d2d2;">26</div>
<div class="t" style="left:-86.0px;width:200px;text-align:center;top:759.03px;font-size:10px;line-height:12px;color:#d2d2d2;">27</div>
<div class="t" style="left:-86.0px;width:200px;text-align:center;top:778.03px;font-size:10px;line-height:12px;color:#d2d2d2;">28</div>
<div class="t" style="left:-86.0px;width:200px;text-align:center;top:797.03px;font-size:10px;line-height:12px;color:#d2d2d2;">29</div>
<div class="r" style="left:1231px;top:209px;width:15px;height:592px;background:#494949;"></div>
<div class="t" style="left:50px;top:250.44px;font-size:40px;line-height:46px;color:#4677b5;font-weight:bold;transform:scaleX(1.146);transform-origin:0 0;-webkit-text-stroke:0.7px #4677b5;">Unit conversions</div>
<div class="t " style="left:50px;top:318.15px;font-size:14px;line-height:16px;color:#4677b5;font-weight:bold;letter-spacing:0.3px;transform:scaleX(1.083);transform-origin:0 0;-webkit-text-stroke:0.3px #4677b5;">1. Enter the value you want to convert:</div>
<div class="t " style="left:50px;top:337.15px;font-size:14px;line-height:16px;color:#4677b5;font-weight:bold;letter-spacing:0.3px;transform:scaleX(1.083);transform-origin:0 0;-webkit-text-stroke:0.3px #4677b5;">2. Pick the unit value from the list:</div>
<div class="t " style="left:140.5px;top:375.15px;font-size:14px;line-height:16px;color:#4677b5;font-weight:bold;letter-spacing:0.5px;">Unit</div>
<div class="t" style="left:-166.5px;width:300px;text-align:right;top:394.95px;font-size:14px;line-height:16px;color:#000;letter-spacing:0.45px;">1</div>
<div class="t " style="left:140.5px;top:394.95px;font-size:14px;line-height:16px;color:#000;letter-spacing:0.45px;">second(s)</div>
<div class="t" style="left:151.0px;width:200px;text-align:center;top:394.95px;font-size:14px;line-height:16px;color:#000;">=</div>
<div class="t" style="left:97px;width:300px;text-align:right;top:394.95px;font-size:14px;line-height:16px;color:#000;letter-spacing:0.45px;">0.01667</div>
<div class="t " style="left:404.5px;top:394.95px;font-size:14px;line-height:16px;color:#000;letter-spacing:0.45px;">minute(s)</div>
<div class="t" style="left:-166.5px;width:300px;text-align:right;top:413.95px;font-size:14px;line-height:16px;color:#000;letter-spacing:0.45px;">1</div>
<div class="t " style="left:140.5px;top:413.95px;font-size:14px;line-height:16px;color:#000;letter-spacing:0.45px;">second(s)</div>
<div class="t" style="left:151.0px;width:200px;text-align:center;top:413.95px;font-size:14px;line-height:16px;color:#000;">=</div>
<div class="t" style="left:97px;width:300px;text-align:right;top:413.95px;font-size:14px;line-height:16px;color:#000;letter-spacing:0.45px;">0.00028</div>
<div class="t " style="left:404.5px;top:413.95px;font-size:14px;line-height:16px;color:#000;letter-spacing:0.45px;">hour(s)</div>
<div class="t" style="left:-166.5px;width:300px;text-align:right;top:432.95px;font-size:14px;line-height:16px;color:#000;letter-spacing:0.45px;">1</div>
<div class="t " style="left:140.5px;top:432.95px;font-size:14px;line-height:16px;color:#000;letter-spacing:0.45px;">second(s)</div>
<div class="t" style="left:151.0px;width:200px;text-align:center;top:432.95px;font-size:14px;line-height:16px;color:#000;">=</div>
<div class="t" style="left:97px;width:300px;text-align:right;top:432.95px;font-size:14px;line-height:16px;color:#000;letter-spacing:0.45px;">0.00001</div>
<div class="t " style="left:404.5px;top:432.95px;font-size:14px;line-height:16px;color:#000;letter-spacing:0.45px;">day(s)</div>
<div class="t" style="left:-166.5px;width:300px;text-align:right;top:451.95px;font-size:14px;line-height:16px;color:#000;letter-spacing:0.45px;">1</div>
<div class="t " style="left:140.5px;top:451.95px;font-size:14px;line-height:16px;color:#000;letter-spacing:0.45px;">second(s)</div>
<div class="t" style="left:151.0px;width:200px;text-align:center;top:451.95px;font-size:14px;line-height:16px;color:#000;">=</div>
<div class="t" style="left:97px;width:300px;text-align:right;top:451.95px;font-size:14px;line-height:16px;color:#000;letter-spacing:0.45px;">3.16881E-08</div>
<div class="t " style="left:404.5px;top:451.95px;font-size:14px;line-height:16px;color:#000;letter-spacing:0.45px;">year(s)</div>
<div class="t" style="left:-166.5px;width:300px;text-align:right;top:470.95px;font-size:14px;line-height:16px;color:#000;letter-spacing:0.45px;">1</div>
<div class="t " style="left:140.5px;top:470.95px;font-size:14px;line-height:16px;color:#000;letter-spacing:0.45px;">minute(s)</div>
<div class="t" style="left:151.0px;width:200px;text-align:center;top:470.95px;font-size:14px;line-height:16px;color:#000;">=</div>
<div class="t" style="left:97px;width:300px;text-align:right;top:470.95px;font-size:14px;line-height:16px;color:#000;letter-spacing:0.45px;">60</div>
<div class="t " style="left:404.5px;top:470.95px;font-size:14px;line-height:16px;color:#000;letter-spacing:0.45px;">seconds(s)</div>
<div class="t" style="left:-166.5px;width:300px;text-align:right;top:489.95px;font-size:14px;line-height:16px;color:#000;letter-spacing:0.45px;">1</div>
<div class="t " style="left:140.5px;top:489.95px;font-size:14px;line-height:16px;color:#000;letter-spacing:0.45px;">minute(s)</div>
<div class="t" style="left:151.0px;width:200px;text-align:center;top:489.95px;font-size:14px;line-height:16px;color:#000;">=</div>
<div class="t" style="left:97px;width:300px;text-align:right;top:489.95px;font-size:14px;line-height:16px;color:#000;letter-spacing:0.45px;">0.01667</div>
<div class="t " style="left:404.5px;top:489.95px;font-size:14px;line-height:16px;color:#000;letter-spacing:0.45px;">hour(s)</div>
<div class="t" style="left:-166.5px;width:300px;text-align:right;top:508.95px;font-size:14px;line-height:16px;color:#000;letter-spacing:0.45px;">1</div>
<div class="t " style="left:140.5px;top:508.95px;font-size:14px;line-height:16px;color:#000;letter-spacing:0.45px;">minute(s)</div>
<div class="t" style="left:151.0px;width:200px;text-align:center;top:508.95px;font-size:14px;line-height:16px;color:#000;">=</div>
<div class="t" style="left:97px;width:300px;text-align:right;top:508.95px;font-size:14px;line-height:16px;color:#000;letter-spacing:0.45px;">0.00069</div>
<div class="t " style="left:404.5px;top:508.95px;font-size:14px;line-height:16px;color:#000;letter-spacing:0.45px;">day(s)</div>
<div class="t" style="left:-166.5px;width:300px;text-align:right;top:527.95px;font-size:14px;line-height:16px;color:#000;letter-spacing:0.45px;">1</div>
<div class="t " style="left:140.5px;top:527.95px;font-size:14px;line-height:16px;color:#000;letter-spacing:0.45px;">minute(s)</div>
<div class="t" style="left:151.0px;width:200px;text-align:center;top:527.95px;font-size:14px;line-height:16px;color:#000;">=</div>
<div class="t" style="left:97px;width:300px;text-align:right;top:527.95px;font-size:14px;line-height:16px;color:#000;letter-spacing:0.45px;">1.90129E-06</div>
<div class="t " style="left:404.5px;top:527.95px;font-size:14px;line-height:16px;color:#000;letter-spacing:0.45px;">year(s)</div>
<div class="t" style="left:-166.5px;width:300px;text-align:right;top:546.95px;font-size:14px;line-height:16px;color:#000;letter-spacing:0.45px;">1</div>
<div class="t " style="left:140.5px;top:546.95px;font-size:14px;line-height:16px;color:#000;letter-spacing:0.45px;">hour(s)</div>
<div class="t" style="left:151.0px;width:200px;text-align:center;top:546.95px;font-size:14px;line-height:16px;color:#000;">=</div>
<div class="t" style="left:97px;width:300px;text-align:right;top:546.95px;font-size:14px;line-height:16px;color:#000;letter-spacing:0.45px;">3600</div>
<div class="t " style="left:404.5px;top:546.95px;font-size:14px;line-height:16px;color:#000;letter-spacing:0.45px;">seconds(s)</div>
<div class="t" style="left:-166.5px;width:300px;text-align:right;top:565.95px;font-size:14px;line-height:16px;color:#000;letter-spacing:0.45px;">1</div>
<div class="t " style="left:140.5px;top:565.95px;font-size:14px;line-height:16px;color:#000;letter-spacing:0.45px;">hour(s)</div>
<div class="t" style="left:151.0px;width:200px;text-align:center;top:565.95px;font-size:14px;line-height:16px;color:#000;">=</div>
<div class="t" style="left:97px;width:300px;text-align:right;top:565.95px;font-size:14px;line-height:16px;color:#000;letter-spacing:0.45px;">60</div>
<div class="t " style="left:404.5px;top:565.95px;font-size:14px;line-height:16px;color:#000;letter-spacing:0.45px;">minute(s)</div>
<div class="t" style="left:-166.5px;width:300px;text-align:right;top:584.95px;font-size:14px;line-height:16px;color:#000;letter-spacing:0.45px;">1</div>
<div class="t " style="left:140.5px;top:584.95px;font-size:14px;line-height:16px;color:#000;letter-spacing:0.45px;">hour(s)</div>
<div class="t" style="left:151.0px;width:200px;text-align:center;top:584.95px;font-size:14px;line-height:16px;color:#000;">=</div>
<div class="t" style="left:97px;width:300px;text-align:right;top:584.95px;font-size:14px;line-height:16px;color:#000;letter-spacing:0.45px;">0.04167</div>
<div class="t " style="left:404.5px;top:584.95px;font-size:14px;line-height:16px;color:#000;letter-spacing:0.45px;">day(s)</div>
<div class="t" style="left:-166.5px;width:300px;text-align:right;top:603.95px;font-size:14px;line-height:16px;color:#000;letter-spacing:0.45px;">1</div>
<div class="t " style="left:140.5px;top:603.95px;font-size:14px;line-height:16px;color:#000;letter-spacing:0.45px;">hour(s)</div>
<div class="t" style="left:151.0px;width:200px;text-align:center;top:603.95px;font-size:14px;line-height:16px;color:#000;">=</div>
<div class="t" style="left:97px;width:300px;text-align:right;top:603.95px;font-size:14px;line-height:16px;color:#000;letter-spacing:0.45px;">0.00011</div>
<div class="t " style="left:404.5px;top:603.95px;font-size:14px;line-height:16px;color:#000;letter-spacing:0.45px;">year(s)</div>
<div class="t" style="left:-166.5px;width:300px;text-align:right;top:622.95px;font-size:14px;line-height:16px;color:#000;letter-spacing:0.45px;">1</div>
<div class="t " style="left:140.5px;top:622.95px;font-size:14px;line-height:16px;color:#000;letter-spacing:0.45px;">day(s)</div>
<div class="t" style="left:151.0px;width:200px;text-align:center;top:622.95px;font-size:14px;line-height:16px;color:#000;">=</div>
<div class="t" style="left:97px;width:300px;text-align:right;top:622.95px;font-size:14px;line-height:16px;color:#000;letter-spacing:0.45px;">86400</div>
<div class="t " style="left:404.5px;top:622.95px;font-size:14px;line-height:16px;color:#000;letter-spacing:0.45px;">seconds(s)</div>
<div class="t" style="left:-166.5px;width:300px;text-align:right;top:641.95px;font-size:14px;line-height:16px;color:#000;letter-spacing:0.45px;">1</div>
<div class="t " style="left:140.5px;top:641.95px;font-size:14px;line-height:16px;color:#000;letter-spacing:0.45px;">day(s)</div>
<div class="t" style="left:151.0px;width:200px;text-align:center;top:641.95px;font-size:14px;line-height:16px;color:#000;">=</div>
<div class="t" style="left:97px;width:300px;text-align:right;top:641.95px;font-size:14px;line-height:16px;color:#000;letter-spacing:0.45px;">1440</div>
<div class="t " style="left:404.5px;top:641.95px;font-size:14px;line-height:16px;color:#000;letter-spacing:0.45px;">minute(s)</div>
<div class="t" style="left:-166.5px;width:300px;text-align:right;top:660.95px;font-size:14px;line-height:16px;color:#000;letter-spacing:0.45px;">1</div>
<div class="t " style="left:140.5px;top:660.95px;font-size:14px;line-height:16px;color:#000;letter-spacing:0.45px;">day(s)</div>
<div class="t" style="left:151.0px;width:200px;text-align:center;top:660.95px;font-size:14px;line-height:16px;color:#000;">=</div>
<div class="t" style="left:97px;width:300px;text-align:right;top:660.95px;font-size:14px;line-height:16px;color:#000;letter-spacing:0.45px;">24</div>
<div class="t " style="left:404.5px;top:660.95px;font-size:14px;line-height:16px;color:#000;letter-spacing:0.45px;">hour(s)</div>
<div class="t" style="left:-166.5px;width:300px;text-align:right;top:679.95px;font-size:14px;line-height:16px;color:#000;letter-spacing:0.45px;">1</div>
<div class="t " style="left:140.5px;top:679.95px;font-size:14px;line-height:16px;color:#000;letter-spacing:0.45px;">day(s)</div>
<div class="t" style="left:151.0px;width:200px;text-align:center;top:679.95px;font-size:14px;line-height:16px;color:#000;">=</div>
<div class="t" style="left:97px;width:300px;text-align:right;top:679.95px;font-size:14px;line-height:16px;color:#000;letter-spacing:0.45px;">0.00274</div>
<div class="t " style="left:404.5px;top:679.95px;font-size:14px;line-height:16px;color:#000;letter-spacing:0.45px;">year(s)</div>
<div class="t" style="left:-166.5px;width:300px;text-align:right;top:698.95px;font-size:14px;line-height:16px;color:#000;letter-spacing:0.45px;">1</div>
<div class="t " style="left:140.5px;top:698.95px;font-size:14px;line-height:16px;color:#000;letter-spacing:0.45px;">year(s)</div>
<div class="t" style="left:151.0px;width:200px;text-align:center;top:698.95px;font-size:14px;line-height:16px;color:#000;">=</div>
<div class="t" style="left:97px;width:300px;text-align:right;top:698.95px;font-size:14px;line-height:16px;color:#000;letter-spacing:0.45px;">31557600</div>
<div class="t " style="left:404.5px;top:698.95px;font-size:14px;line-height:16px;color:#000;letter-spacing:0.45px;">seconds(s)</div>
<div class="t" style="left:-166.5px;width:300px;text-align:right;top:717.95px;font-size:14px;line-height:16px;color:#000;letter-spacing:0.45px;">1</div>
<div class="t " style="left:140.5px;top:717.95px;font-size:14px;line-height:16px;color:#000;letter-spacing:0.45px;">year(s)</div>
<div class="t" style="left:151.0px;width:200px;text-align:center;top:717.95px;font-size:14px;line-height:16px;color:#000;">=</div>
<div class="t" style="left:97px;width:300px;text-align:right;top:717.95px;font-size:14px;line-height:16px;color:#000;letter-spacing:0.45px;">525960</div>
<div class="t " style="left:404.5px;top:717.95px;font-size:14px;line-height:16px;color:#000;letter-spacing:0.45px;">minute(s)</div>
<div class="t" style="left:-166.5px;width:300px;text-align:right;top:736.95px;font-size:14px;line-height:16px;color:#000;letter-spacing:0.45px;">1</div>
<div class="t " style="left:140.5px;top:736.95px;font-size:14px;line-height:16px;color:#000;letter-spacing:0.45px;">year(s)</div>
<div class="t" style="left:151.0px;width:200px;text-align:center;top:736.95px;font-size:14px;line-height:16px;color:#000;">=</div>
<div class="t" style="left:97px;width:300px;text-align:right;top:736.95px;font-size:14px;line-height:16px;color:#000;letter-spacing:0.45px;">8766</div>
<div class="t " style="left:404.5px;top:736.95px;font-size:14px;line-height:16px;color:#000;letter-spacing:0.45px;">hour(s)</div>
<div class="t" style="left:-166.5px;width:300px;text-align:right;top:755.95px;font-size:14px;line-height:16px;color:#000;letter-spacing:0.45px;">1</div>
<div class="t " style="left:140.5px;top:755.95px;font-size:14px;line-height:16px;color:#000;letter-spacing:0.45px;">year(s)</div>
<div class="t" style="left:151.0px;width:200px;text-align:center;top:755.95px;font-size:14px;line-height:16px;color:#000;">=</div>
<div class="t" style="left:97px;width:300px;text-align:right;top:755.95px;font-size:14px;line-height:16px;color:#000;letter-spacing:0.45px;">365.25</div>
<div class="t " style="left:404.5px;top:755.95px;font-size:14px;line-height:16px;color:#000;letter-spacing:0.45px;">day(s)</div>
<div class="r" style="left:497px;top:316px;width:77px;height:20px;background:#ecebdd;box-sizing:border-box;border:2px solid #000;"></div>
<div class="r" style="left:569px;top:331px;width:5px;height:5px;background:#000;"></div>
<div class="r" style="left:568px;top:334px;width:1px;height:2px;background:#fff;"></div>
<div class="t" style="left:268px;width:300px;text-align:right;top:319.00px;font-size:13px;line-height:15px;color:#000;">1</div>
<div class="r" style="left:0px;top:801px;width:1246px;height:21px;background:#474747;"></div>
<div class="r" style="left:0px;top:801px;width:87px;height:21px;background:#444444;"></div>
<div class="r" style="left:0px;top:801px;width:1231px;height:1px;background:#3a3a3a;"></div>
<svg class="s" style="left:5.8px;top:809px;" width="9" height="8" viewBox="0 0 9 8"><rect x="0" y="0" width="1.3" height="7.2" fill="#c8c8c8"/><g transform="translate(1.4 0)"><path d="M0 3.6 L3.6 0 V2.1 H7 V5.1 H3.6 V7.2 Z" fill="#c8c8c8"/></g></svg>
<svg class="s" style="left:26.7px;top:809px;" width="8" height="8" viewBox="0 0 8 8"><path d="M0 3.6 L3.6 0 V2.1 H7 V5.1 H3.6 V7.2 Z" fill="#c8c8c8"/></svg>
<svg class="s" style="left:48px;top:809px;" width="8" height="8" viewBox="0 0 8 8"><path d="M7 3.6 L3.4 0 V2.1 H0 V5.1 H3.4 V7.2 Z" fill="#c8c8c8"/></svg>
<svg class="s" style="left:69px;top:809px;" width="9" height="8" viewBox="0 0 9 8"><path d="M7 3.6 L3.4 0 V2.1 H0 V5.1 H3.4 V7.2 Z" fill="#c8c8c8"/><rect x="6.9" y="0" width="1.3" height="7.2" fill="#c8c8c8"/></svg>
<div class="r" style="left:87px;top:801px;width:37px;height:17px;background:#ffffff;"></div>
<div class="r" style="left:87px;top:818px;width:37px;height:2px;background:#000000;"></div>
<div class="t " style="left:93.3px;top:804.52px;font-size:11.5px;line-height:13px;color:#000;font-weight:bold;">Time</div>
<div class="t " style="left:133.5px;top:804.52px;font-size:11.5px;line-height:13px;color:#fff;">Length</div>
<div class="t " style="left:184.3px;top:804.52px;font-size:11.5px;line-height:13px;color:#fff;">Mass</div>
<div class="t " style="left:225px;top:804.52px;font-size:11.5px;line-height:13px;color:#fff;">Temperature</div>
<div class="t " style="left:305.4px;top:804.52px;font-size:11.5px;line-height:13px;color:#fff;">Energy</div>
<div class="t " style="left:355px;top:804.52px;font-size:11.5px;line-height:13px;color:#fff;">Fluids</div>
<div class="r" style="left:177px;top:805px;width:1px;height:14px;background:#363636;"></div>
<div class="r" style="left:217px;top:805px;width:1px;height:14px;background:#363636;"></div>
<div class="r" style="left:298px;top:805px;width:1px;height:14px;background:#363636;"></div>
<div class="r" style="left:348px;top:805px;width:1px;height:14px;background:#363636;"></div>
<div class="r" style="left:394px;top:805px;width:1px;height:14px;background:#363636;"></div>
<svg class="s" style="left:405px;top:806px;" width="10" height="10" viewBox="0 0 10 10"><path d="M5 0.5 V9.5 M0.5 5 H9.5" stroke="#fff" stroke-width="1.8"/></svg>
<div class="r" style="left:617px;top:802px;width:614px;height:20px;background:#474747;"></div>
<div class="r" style="left:619px;top:805px;width:612px;height:15px;background:#4b4b4b;"></div>
<div class="r" style="left:612px;top:802px;width:1px;height:20px;background:#5d5d5d;"></div>
<div class="r" style="left:615px;top:802px;width:1px;height:20px;background:#5d5d5d;"></div>
<svg class="s" style="left:624.5px;top:808.5px;" width="5" height="8" viewBox="0 0 5 8"><path d="M4.5 0 V8 L0 4 Z" fill="#d0d0d0"/></svg>
<div class="r" style="left:634px;top:808px;width:238px;height:9px;background:#939393;border-radius:4.5px;"></div>
<svg class="s" style="left:1219px;top:808px;" width="6" height="9" viewBox="0 0 6 9"><path d="M0 0 V8.5 L5.5 4.25 Z" fill="#cfcfcf"/></svg>
<svg class="s" style="left:1234px;top:214px;" width="9" height="5" viewBox="0 0 9 5"><path d="M0 5 L4.5 0 L9 5 Z" fill="#d0d0d0"/></svg>
<div class="r" style="left:1234px;top:224px;width:9px;height:202px;background:#939393;border-radius:4.5px;"></div>
<svg class="s" style="left:1234px;top:753px;" width="9" height="5" viewBox="0 0 9 5"><path d="M0 0 L4.5 5 L9 0 Z" fill="#d0d0d0"/></svg>
<div class="r" style="left:1232px;top:763px;width:14px;height:45px;background:#3f3f3f;"></div>
<div class="r" style="left:1232px;top:763px;width:14px;height:1px;background:#575757;"></div>
<div class="r" style="left:1232px;top:778px;width:14px;height:1px;background:#575757;"></div>
<div class="r" style="left:1232px;top:792px;width:14px;height:1px;background:#575757;"></div>
<div class="r" style="left:1232px;top:807px;width:14px;height:1px;background:#575757;"></div>
<svg class="s" style="left:1235.5px;top:767.5px;" width="7" height="8" viewBox="0 0 7 8"><path d="M0 3.2 L3.5 0 L7 3.2 Z M0 7 L3.5 3.8 L7 7 Z" fill="#fff"/></svg>
<svg class="s" style="left:1236px;top:782px;" width="6" height="6" viewBox="0 0 6 6"><circle cx="3" cy="3" r="2.7" fill="#f04848"/></svg>
<svg class="s" style="left:1235.5px;top:796.5px;" width="7" height="8" viewBox="0 0 7 8"><path d="M0 0 L3.5 3.2 L7 0 Z M0 3.8 L3.5 7 L7 3.8 Z" fill="#fff"/></svg>
<svg class="s" style="left:1233px;top:808px;" width="13" height="14" viewBox="0 0 13 14"><path d="M0 0.5 H13 M3.5 0 V14" stroke="#fff" stroke-width="1.3"/><path d="M6 4 L11.5 9.5 M6 4 V8 M6 4 H10" stroke="#fff" stroke-width="1.2" fill="none"/></svg>
<div class="r" style="left:0px;top:822px;width:1246px;height:28px;background:#515151;"></div>
<div class="r" style="left:542px;top:827px;width:1px;height:18px;background:#404040;"></div>
<div class="r" style="left:0px;top:822px;width:1246px;height:1px;background:#4a4a4a;"></div>
<svg class="s" style="left:911px;top:829px;" width="19" height="14" viewBox="0 0 19 14"><path d="M2.5 6.5 A7 6 0 0 1 15 4 M16.5 7.5 A7 6 0 0 1 4 10" stroke="#7a7a7a" stroke-width="1.5" fill="none"/><path d="M13 1 L17.5 4.5 L12.5 6 Z M6 13 L1.5 9.5 L6.5 8 Z" fill="#7a7a7a"/></svg>
<div class="t " style="left:947px;top:828.69px;font-size:11px;line-height:13px;color:#c8c8c8;">Ins</div>
<div class="r" style="left:979px;top:826px;width:1px;height:18px;background:#434343;"></div>
<div class="t " style="left:986px;top:828.69px;font-size:11px;line-height:13px;color:#c8c8c8;">AUTO</div>
<div class="r" style="left:1033px;top:834px;width:7px;height:1px;background:#d0d0d0;"></div>
<div class="r" style="left:1047px;top:834px;width:110px;height:1px;background:#8a8a8a;"></div>
<div class="r" style="left:1100px;top:826px;width:1px;height:17px;background:#8a8a8a;"></div>
<svg class="s" style="left:1095px;top:829px;" width="11" height="11" viewBox="0 0 11 11"><circle cx="5.5" cy="5.5" r="5" fill="#fff"/></svg>
<svg class="s" style="left:1162px;top:830px;" width="9" height="9" viewBox="0 0 9 9"><path d="M4.5 0 V9 M0 4.5 H9" stroke="#d0d0d0" stroke-width="1.2"/></svg>
<div class="t " style="left:1187px;top:828.69px;font-size:11px;line-height:13px;color:#c8c8c8;">100%</div>
<svg class="s" style="left:1225px;top:829px;" width="8" height="6" viewBox="0 0 8 6"><path d="M0.8 0.8 L3 3 L0.8 5.2 M4.6 0.8 L6.8 3 L4.6 5.2" stroke="#fff" stroke-width="1.5" fill="none"/></svg>
</body></html>
